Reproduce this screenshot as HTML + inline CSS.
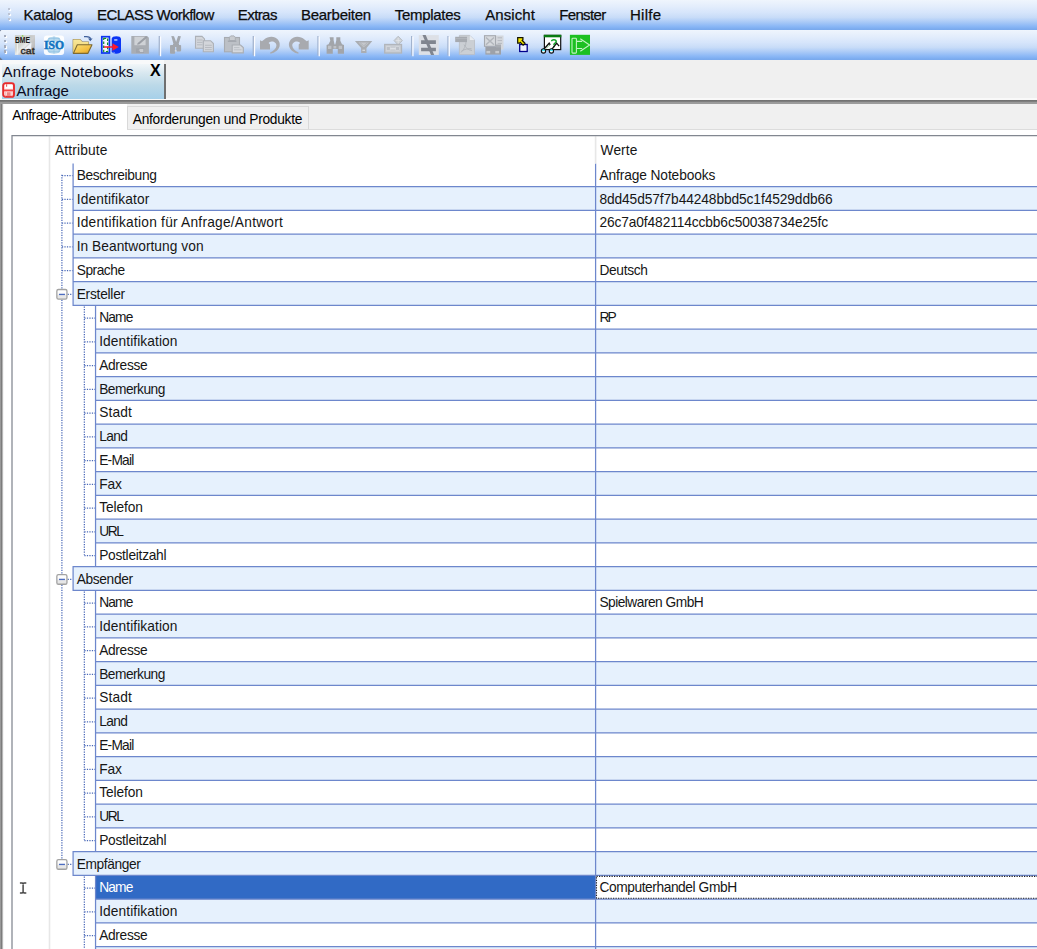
<!DOCTYPE html>
<html lang="de">
<head>
<meta charset="utf-8">
<title>Anfrage Notebooks</title>
<style>
html,body{margin:0;padding:0;overflow:hidden;}
body{width:1037px;height:949px;overflow:hidden;background:#fff;position:relative;font-family:"Liberation Sans",sans-serif;color:#000;}
.bar{position:absolute;left:0;width:1037px;height:30px;background:linear-gradient(to bottom,#eff5fd 0%,#e3edfc 22%,#d6e5fb 42%,#c8dcf8 58%,#accbf7 72%,#8cb8f6 87%,#7cacf0 96%,#78a8ec 100%);}
#menubar{top:0;}
#toolbar{top:30px;}
.mi{position:absolute;top:4.5px;font-size:15px;line-height:20px;white-space:pre;color:#0c0c0c;-webkit-text-stroke:0.25px #0c0c0c;}
.grip{position:absolute;left:6.5px;width:3px;}
.grip i{display:block;width:2.2px;height:2.2px;margin-bottom:2.9px;background:#bcc4d4;box-shadow:1.1px 1.1px 0 #fff;}
#docarea{position:absolute;left:0;top:60px;width:1037px;height:44px;background:#f0f0f0;}
#doctabbg{position:absolute;left:0;top:0;width:164.2px;height:38.5px;background:#f8f9fa;}
#doctab{position:absolute;left:2px;top:3.5px;width:162.2px;height:35px;background:linear-gradient(to bottom,#f1f6f9 0%,#d9e8f0 25%,#bcd9e8 60%,#a6d0e9 100%);border-right:2px solid #6f6f6f;}
#doctab .n{position:absolute;left:0.6px;top:-0.2px;font-size:15px;line-height:17px;white-space:pre;letter-spacing:0.16px;color:#0a0a1e}
#doctab .x{position:absolute;left:148px;top:-2px;font-size:16px;font-weight:bold;line-height:17px;}
#doctab .a{position:absolute;left:14.4px;top:18.7px;font-size:15px;line-height:17px;white-space:pre;color:#0a0a1e}
#docwhite{position:absolute;left:0;top:37.6px;width:1037px;height:2.4px;background:#f9f9f9;}
#docline{position:absolute;left:0;top:40px;width:1037px;height:4px;background:linear-gradient(to bottom,#727272 0,#747474 35%,#9a9a9a 45%,#9c9c9c 100%);}
#panel{position:absolute;left:0;top:104px;width:1037px;height:845px;background:#fff;overflow:hidden;}
#panel .lb{position:absolute;left:0;top:0;width:4px;height:845px;background:linear-gradient(to right,#b0b0b0 0,#7c7c7c 28%,#7c7c7c 42%,#b4b4b4 62%,#f2f2f2 85%,#fff 100%);}
#tabstrip{position:absolute;left:126.5px;top:0;width:911px;height:24.6px;background:#f0f0f0;border-bottom:1px solid #dcdcdc;}
#tab2{position:absolute;left:0;top:1.6px;width:180px;height:22px;border:1px solid #d9d9d9;border-bottom:none;background:#f0f0f0;}
.tt{position:absolute;font-size:13.75px;line-height:16px;white-space:pre;color:#000;}
#tree{position:absolute;left:0;top:0;width:1037px;height:949px;overflow:hidden;}
.t{position:absolute;font-size:13.75px;line-height:24px;height:24px;white-space:pre;color:#161616;}
svg{position:absolute;left:0;top:0;overflow:visible}
</style>
</head>
<body>
<div id="menubar" class="bar">
<div class="grip" style="top:7.5px;left:7.6px"><i></i><i></i><i></i></div>
<span class="mi" style="left:23.5px;letter-spacing:-0.268px">Katalog</span><span class="mi" style="left:97px;letter-spacing:-0.538px">ECLASS Workflow</span><span class="mi" style="left:237.8px;letter-spacing:-0.586px">Extras</span><span class="mi" style="left:301px;letter-spacing:-0.276px">Bearbeiten</span><span class="mi" style="left:394.8px;letter-spacing:-0.297px">Templates</span><span class="mi" style="left:485.3px;letter-spacing:0.057px">Ansicht</span><span class="mi" style="left:559.2px;letter-spacing:-0.651px">Fenster</span><span class="mi" style="left:629.9px;letter-spacing:0.317px">Hilfe</span>
</div>
<div id="toolbar" class="bar">
<div class="grip" style="top:5.2px;left:4.2px"><i style="background:#a4abbb"></i><i style="background:#a4abbb"></i><i style="background:#a4abbb"></i><i style="background:#a4abbb"></i></div>
<svg id="icons" width="1037" height="30" viewBox="0 30 1037 30" style="left:0;top:0">
<defs>
<linearGradient id="gBme" x1="0" y1="0" x2="1" y2="1"><stop offset="0" stop-color="#c9ccc6"/><stop offset="0.4" stop-color="#d6d8d4"/><stop offset="0.52" stop-color="#e9ecee"/><stop offset="0.62" stop-color="#c9c9c9"/><stop offset="1" stop-color="#a9a9a9"/></linearGradient>
<linearGradient id="gFold" x1="0" y1="0" x2="1" y2="1"><stop offset="0" stop-color="#fbe27a"/><stop offset="0.6" stop-color="#f3c043"/><stop offset="1" stop-color="#dc9a1c"/></linearGradient>
<linearGradient id="gFoldB" x1="0" y1="0" x2="0" y2="1"><stop offset="0" stop-color="#f8e79a"/><stop offset="1" stop-color="#efd06a"/></linearGradient>
</defs>
<!-- separators -->
<g stroke-width="1.25" fill="none">
<path d="M159.3 36V55.5M253.3 36V55.5M318 36V55.5M411.7 36V55.5M448 36V55.5" stroke="#9fb0cc"/>
<path d="M160.55 36.6V56.2M254.55 36.6V56.2M319.25 36.6V56.2M412.95 36.6V56.2M449.25 36.6V56.2" stroke="#fbfcff"/>
</g>
<!-- 1 BME cat -->
<g>
<rect x="14.9" y="35.2" width="20.1" height="19.7" fill="url(#gBme)"/>
<path d="M24.500 49L31.500 42.600L31 49.500Z" fill="#f4f8ff" opacity="0.9"/><rect x="29" y="35.200" width="6" height="7.500" fill="#c2c2c2" opacity="0.7"/>
<path d="M17.5 43.5V54.5" stroke="#eef1ee" stroke-width="1"/>
<circle cx="22.6" cy="35.9" r="0.9" fill="#8fd060"/>
<text x="14.9" y="42.6" font-family="Liberation Sans, sans-serif" font-weight="bold" font-size="8.6" textLength="15" lengthAdjust="spacingAndGlyphs" fill="#1a1a1a">BME</text>
<text x="20.6" y="54.3" font-family="Liberation Sans, sans-serif" font-size="9.6" textLength="14" lengthAdjust="spacingAndGlyphs" fill="#222" stroke="#222" stroke-width="0.3">cat</text>
</g>
<!-- 2 ISO -->
<g>
<rect x="43.9" y="35.4" width="20.2" height="19.6" rx="3" fill="#fff" opacity="0.92"/>
<circle cx="54" cy="45.1" r="8.7" fill="#b7d9ee"/>
<path d="M46 41.5h16M45.5 48.6h17M48 38.4h12M48 51.8h12M54 36.5v17M50 37.3c-3 4-3 11.600 0 15.600M58 37.300c3 4 3 11.600 0 15.600" stroke="#8fc2e2" stroke-width="0.7" fill="none"/>
<rect x="43.9" y="41" width="20.2" height="7.9" fill="#fff" opacity="0.55"/>
<text x="43.9" y="49.1" font-family="Liberation Serif, serif" font-weight="bold" font-size="12.6" textLength="20.2" lengthAdjust="spacingAndGlyphs" fill="#1173c2" stroke="#1173c2" stroke-width="0.5">ISO</text>
</g>
<!-- 3 open folder -->
<g>
<path d="M73.2 53.3V39.6h6.8l2.300 2.500h6.200V45" fill="url(#gFoldB)" stroke="#8d7d52" stroke-width="1.1" stroke-linejoin="round"/>
<path d="M73.2 53.3V39.600h6.800l2.300 2.500h6.200v2.900H77z" fill="url(#gFoldB)"/>
<path d="M77.300 44.700H92l-4.200 8.700H73.400z" fill="url(#gFold)" stroke="#7d6a33" stroke-width="1.1" stroke-linejoin="round"/>
<path d="M84 36.700h2.300M86.300 36.700c2.500 0 4 .8 4.200 2.200" stroke="#3f5f9a" stroke-width="1.300" fill="none"/>
<path d="M88 38.600h4.600l-2.300 2.700z" fill="#3f5f9a"/>
</g>
<!-- 4 export to db -->
<g>
<rect x="101.800" y="36.700" width="7.600" height="16.300" fill="#f4f6ff" stroke="#0b35f5" stroke-width="1.700"/>
<rect x="103.700" y="38.300" width="3.900" height="13.300" fill="none" stroke="#128a28" stroke-width="1.200" stroke-dasharray="2.500 1.600"/>
<path d="M111.700 38.800c0-3.300 9.300-3.300 9.300 0v12.400c0 3.300-9.300 3.300-9.300 0z" fill="#0b35f5"/>
<rect x="114.200" y="39.300" width="3.200" height="1.300" fill="#dfe6ff"/>
<path d="M104 46.200h8.500v-2.900l6.300 3.700-6.300 3.700v-2.900H104z" fill="#ff1a2c"/>
<path d="M113.500 52.300l1.200.6" stroke="#cdd6ff" stroke-width="0.8"/>
</g>
<!-- 5 save (disabled) -->
<g>
<path d="M131.300 35.900h15.800l1.800 1.800v16h-17.600z" fill="#a9adb3"/>
<rect x="134.400" y="36.800" width="11.200" height="8.400" fill="#cfd2d6"/>
<path d="M137.500 43.200l8.500-7.300 1.600 1.300-8.400 7.300z" fill="#9b9fa6"/>
<path d="M137 43.800l1.900-.3-.9 1.500z" fill="#8e9299"/>
<rect x="136" y="48.300" width="8" height="4.600" fill="#a0a4ab"/>
<path d="M136.800 50.800h2.700v-1.700h3.800v2.900h-3.400v-1z" fill="#c9ccd1"/>
</g>
<!-- 6 cut (disabled) -->
<g fill="#a3a7ad">
<path d="M171.300 36l2.700.2 2.100 5.800 2-6 2.800.2-2.700 9.300h-4.300z"/>
<rect x="170" y="45" width="5.100" height="8.700" rx="0.800"/>
<rect x="176.300" y="45" width="4.800" height="6.400" rx="0.800"/>
<path d="M173 44h6v3h-6z"/>
<rect x="174.800" y="50" width="1.700" height="1.500" fill="#d8dce2"/>
</g>
<!-- 7 copy (disabled) -->
<g stroke="#adb1b7" stroke-width="1.100" fill="#d3d6db">
<path d="M195.500 36.400h6.500l2.500 2.500v9.400h-9z"/>
<path d="M203.300 40.700h7.300l2.800 2.800v8.300h-10.100z"/>
<path d="M197 40h5.500M197 42.400h5.500M197 44.800h5.500M205 45.300h6.800M205 47.500h6.800M205 49.700h6.800" stroke="#b4b8be" stroke-width="0.9" fill="none"/>
</g>
<!-- 8 paste (disabled) -->
<g>
<rect x="224.500" y="37.500" width="15" height="14.300" fill="#bcc0c6" stroke="#a7abb1" stroke-width="1.100"/>
<path d="M229.400 40.600v-3.400l1.300-1.300h3.300l1.300 1.300v3.400z" fill="#c9ccd1" stroke="#a7abb1" stroke-width="0.9"/>
<path d="M227.800 41.200h8.600" stroke="#a0a4ab" stroke-width="1.200"/>
<path d="M232.200 45h8.300l2.800 2.600v5.300h-11.100z" fill="#d5d8dd" stroke="#a9adb3" stroke-width="1.100"/>
<path d="M234 47.600h5.500M234 49.800h7.500" stroke="#b9bdc3" stroke-width="0.9"/>
</g>
<!-- 9 undo (disabled) -->
<g fill="#a8aaaf">
<path d="M260 40.3L262 41.2L264.2 39.6C267 37.2 271.5 36 275 37.6C278.6 39.3 280.4 42.8 279.6 46.2C278.7 49.7 275.2 52.6 270.4 53.8L270.1 52.5C273.6 51 276.2 48.3 276.4 45.7C276.6 43 274.3 41.3 271.7 41.4C270.2 41.5 269.2 42.1 268.6 43.1L270 44.5V49.5H260Z"/>
</g>
<!-- 10 redo (disabled) -->
<g fill="#a8aaaf" transform="translate(568.700 0) scale(-1 1)">
<path d="M260 40.3L262 41.2L264.2 39.6C267 37.2 271.5 36 275 37.6C278.6 39.3 280.4 42.8 279.6 46.2C278.7 49.7 275.2 52.6 270.4 53.8L270.1 52.5C273.6 51 276.2 48.3 276.4 45.7C276.6 43 274.3 41.3 271.7 41.4C270.2 41.5 269.2 42.1 268.6 43.1L270 44.5V49.5H260Z"/>
</g>
<!-- 11 find (disabled) -->
<g fill="#a2a5aa">
<path d="M329.600 37.300h4v3l1 4.200h.7l1-4.200v-3h4v3.400l1.700 3.600 2 .7v8.700h-6.200v-4.600h-5v4.600h-6.200v-8.700l2-.7 1.700-3.600z"/>
<path d="M328 45.700h3.400v3.300H328zM338.700 45.700h3.400v3.300h-3.400zM333.500 46h2.800v2.400h-2.800z" fill="#bfc2c7"/>
</g>
<!-- 12 filter (disabled) -->
<g>
<path d="M354.900 41.100h17.400l-5.800 6.800v5.100h-5.400v-5.100z" fill="#aaadb2"/>
<path d="M358.500 42.600h10.400l-5.200 4.600z" fill="#c5c8cd"/>
<path d="M360 42.600l3.700 3.300 3.700-3.300" stroke="#aaadb2" stroke-width="0.800" fill="none"/>
<rect x="362.400" y="49.700" width="2.600" height="1.100" fill="#dde0e5"/>
</g>
<!-- 13 export (disabled) -->
<g>
<path d="M398.200 36.200l4.200 4.400-4.200 4.400-4.200-4.400z" fill="#ccd0d5" stroke="#b6bac0" stroke-width="0.900"/>
<path d="M398.200 38v5.500M395.800 40.600h4.800" stroke="#e1e4e8" stroke-width="0.900"/>
<rect x="384.700" y="44.500" width="16.800" height="8.500" fill="#c9cdd3" stroke="#b1b5bb" stroke-width="1.300"/>
<rect x="386.300" y="46.700" width="3.900" height="3.900" fill="#bcc0c7" stroke="#d9dce1" stroke-width="0.600"/>
<rect x="395.700" y="46.700" width="3.900" height="3.900" fill="#bcc0c7" stroke="#d9dce1" stroke-width="0.600"/>
<path d="M390.200 48.700h5.500" stroke="#e3e6ea" stroke-width="1"/>
</g>
<!-- 14 not-equal -->
<g>
<rect x="418.800" y="35.100" width="20" height="19.800" fill="#dde0e6"/>
<path d="M421.100 40.200h14.800v3.700h-14.800zM421.100 47.700h14.800v3.500h-14.800z" fill="#80858f"/>
<path d="M422.500 35.100h3.200l8.500 19.800h-3.200z" fill="#80858f"/>
</g>
<!-- 15 pdf (disabled) -->
<g>
<path d="M459.400 35.400h10.400l4.700 4.700v14.500h-15.100z" fill="#cbcfd4" stroke="#b9bdc3" stroke-width="0.800"/>
<path d="M469.800 35.400l4.700 4.700h-4.700z" fill="#e9ecf0"/>
<rect x="455.200" y="36.800" width="11.800" height="5.300" fill="#a6aab0"/>
<path d="M455.200 38.500h11.800" stroke="#b4b8be" stroke-width="0.8"/>
<path d="M461 52.500c3-3 5-7 5-10.500M464 44.500c1.500 3.500 4.500 5.500 8 6M461.500 51c3-1.800 6.500-2.500 10-2.300" stroke="#b3b7bd" stroke-width="1" fill="none"/>
</g>
<!-- 16 grid (disabled) -->
<g>
<rect x="496" y="35.500" width="7.500" height="14" fill="#d4d7dc"/>
<path d="M497.600 37.800h4.400M497.600 40.600h4.400M497.600 43.400h4.400" stroke="#b5b9bf" stroke-width="1"/>
<rect x="484.500" y="35.700" width="11" height="10.600" fill="#d7dade" stroke="#a5a9af" stroke-width="1.100"/>
<path d="M486 37.500l8 7.300M494 37.500l-8 7.300" stroke="#b2b6bc" stroke-width="1.500"/>
<rect x="485.400" y="46.800" width="15.600" height="7.800" fill="#9da1a8"/>
<rect x="496" y="44.500" width="5" height="3" fill="#a8acb2"/>
<rect x="486.400" y="50.900" width="3.800" height="2.400" fill="#c6c9ce"/>
<rect x="495.300" y="50.900" width="3.800" height="2.400" fill="#c6c9ce"/>
</g>
<!-- 17 pointer -->
<g>
<rect x="519.700" y="44.500" width="7.500" height="7" fill="#eef2ff" stroke="#00008c" stroke-width="1.300"/>
<path d="M517.7 37.7h5.200v2.100l-.7.7 2.800 2.800-1.900 1.900-2.800-2.800-.7.7h-1.900z" fill="#f6e600" stroke="#151500" stroke-width="1.250" stroke-linejoin="miter"/>
</g>
<!-- 18 glasses help -->
<g>
<rect x="544.400" y="35.400" width="16.300" height="14.200" fill="#fff" stroke="#111" stroke-width="1.200"/>
<rect x="543.800" y="34.800" width="17.500" height="2.500" fill="#0a7a12"/>
<path d="M551.6 41.300c0-2.200 4.600-2.200 4.600.2 0 1.700-2.300 1.700-2.300 3.400" fill="none" stroke="#12a426" stroke-width="1.500"/><rect x="553.100" y="45.700" width="1.600" height="1.500" fill="#12a426"/>
<path d="M546.5 48l4.200-3.600" stroke="#3aa84a" stroke-width="0.9" stroke-dasharray="1.500 1.200"/>
<path d="M543.600 49.500l5.600-6.300 1 1.600M551.700 49.500l5-6.300 2.400 3" stroke="#111" stroke-width="1.300" fill="none"/>
<circle cx="543.5" cy="51" r="2.100" fill="#f4ffff" stroke="#111" stroke-width="1.200"/><path d="M541.900 50.800a1.600 1.600 0 0 1 3.200 0z" fill="#12e2ff"/>
<circle cx="551.4" cy="51" r="2.100" fill="#f4ffff" stroke="#111" stroke-width="1.200"/><path d="M549.800 50.800a1.600 1.600 0 0 1 3.200 0z" fill="#12e2ff"/>
</g>
<!-- 19 green arrow -->
<g>
<rect x="569.900" y="34.800" width="20.100" height="20.100" fill="#1cc022"/>
<rect x="572" y="38.200" width="4.400" height="14.900" rx="0.800" fill="none" stroke="#c4f3c4" stroke-width="1.100"/>
<path d="M576.600 41.400h5.600M576.600 48.500h5.600M580.300 38.800l9.300 6.200-9.300 6.200" fill="none" stroke="#c4f3c4" stroke-width="1.100"/>
</g>
</svg>

<svg width="4" height="32" viewBox="0 0 4 32" style="left:0;top:-1px"><path d="M0 1h1.400L0 2.400zM0 28.200l2.600 2.600L0 32z" fill="#6c7a93"/></svg>
</div>
<div id="docarea">
<div id="docwhite"></div>
<div id="doctabbg"></div>
<div id="doctab"><span class="n">Anfrage Notebooks</span><span class="x">X</span><svg width="14" height="17" viewBox="0 0 14 17" style="left:0;top:18.3px"><rect x="1.2" y="1.2" width="10.800" height="13.600" rx="2.400" fill="#ffe9e9" stroke="#e92a2a" stroke-width="1.900"/><rect x="3.100" y="2.600" width="7.200" height="3.800" fill="#fff"/><path d="M4.600 2.200v2.600" stroke="#ee5555" stroke-width="1.100"/><rect x="2" y="7.500" width="9.600" height="1.900" fill="#f24545"/><rect x="4.800" y="10.200" width="3.800" height="4" fill="#ee8585"/><path d="M3.300 9.400v5M10 9.400v5" stroke="#f7b0b0" stroke-width="0.900"/></svg>
<span class="a">Anfrage</span></div>
<div id="docline"></div>
</div>
<div id="panel">
<div class="lb"></div>
<div id="tabstrip"><div id="tab2"></div></div>
<span class="tt" style="left:12.2px;top:4.4px;letter-spacing:-0.413px">Anfrage-Attributes</span>
<span class="tt" style="left:132.8px;top:8px;letter-spacing:-0.281px">Anforderungen und Produkte</span>
</div>
<div id="tree">
<svg width="1037" height="949" viewBox="0 0 1037 949">
<defs><linearGradient id="bg" x1="0" y1="0" x2="0" y2="1"><stop offset="0" stop-color="#fff"/><stop offset="0.5" stop-color="#fbfbfb"/><stop offset="0.55" stop-color="#e9e9e9"/><stop offset="1" stop-color="#e4e4e4"/></linearGradient></defs>
<rect x="73.1" y="186.7" width="963.9" height="23.75" fill="#e6f1fd"/>
<rect x="73.1" y="234.2" width="963.9" height="23.75" fill="#e6f1fd"/>
<rect x="73.1" y="281.7" width="963.9" height="23.75" fill="#e6f1fd"/>
<rect x="95.55" y="329.2" width="941.45" height="23.75" fill="#e6f1fd"/>
<rect x="95.55" y="376.7" width="941.45" height="23.75" fill="#e6f1fd"/>
<rect x="95.55" y="424.2" width="941.45" height="23.75" fill="#e6f1fd"/>
<rect x="95.55" y="471.7" width="941.45" height="23.75" fill="#e6f1fd"/>
<rect x="95.55" y="519.2" width="941.45" height="23.75" fill="#e6f1fd"/>
<rect x="73.1" y="566.7" width="963.9" height="23.75" fill="#e6f1fd"/>
<rect x="95.55" y="614.2" width="941.45" height="23.75" fill="#e6f1fd"/>
<rect x="95.55" y="661.7" width="941.45" height="23.75" fill="#e6f1fd"/>
<rect x="95.55" y="709.2" width="941.45" height="23.75" fill="#e6f1fd"/>
<rect x="95.55" y="756.7" width="941.45" height="23.75" fill="#e6f1fd"/>
<rect x="95.55" y="804.2" width="941.45" height="23.75" fill="#e6f1fd"/>
<rect x="73.1" y="851.7" width="963.9" height="23.75" fill="#e6f1fd"/>
<rect x="95.55" y="899.2" width="941.45" height="23.75" fill="#e6f1fd"/>
<rect x="95.55" y="946.7" width="941.45" height="23.75" fill="#e6f1fd"/>
<rect x="95.55" y="875.45" width="500.05" height="23.75" fill="#316ac5"/>
<rect x="595.6" y="875.45" width="441.4" height="23.75" fill="#fff"/>
<path d="M72.5 186.7H1037 M72.5 210.45H1037 M72.5 234.2H1037 M72.5 257.95H1037 M72.5 281.7H1037 M72.5 305.45H1037 M94.95 329.2H1037 M94.95 352.95H1037 M94.95 376.7H1037 M94.95 400.45H1037 M94.95 424.2H1037 M94.95 447.95H1037 M94.95 471.7H1037 M94.95 495.45H1037 M94.95 519.2H1037 M94.95 542.95H1037 M72.5 566.7H1037 M72.5 590.45H1037 M94.95 614.2H1037 M94.95 637.95H1037 M94.95 661.7H1037 M94.95 685.45H1037 M94.95 709.2H1037 M94.95 732.95H1037 M94.95 756.7H1037 M94.95 780.45H1037 M94.95 804.2H1037 M94.95 827.95H1037 M72.5 851.7H1037 M72.5 875.45H1037 M94.95 899.2H1037 M94.95 922.95H1037 M94.95 946.7H1037 M94.95 970.45H1037 M73.1 163.55V305.45 M95.55 305.45V566.7 M73.1 566.7V590.45 M95.55 590.45V851.7 M73.1 851.7V875.45 M95.55 875.45V949 M595.6 163.55V949" stroke="#6d87cc" stroke-width="1.25" fill="none"/>
<path d="M49.5 136.3V949 M595.6 136.3V163.55" stroke="#e7e7e7" stroke-width="1.6" fill="none"/>
<path d="M61.9 174.82V859.08 M61.9 175.57H72.5 M61.9 199.32H72.5 M61.9 223.07H72.5 M61.9 246.82H72.5 M61.9 270.57H72.5 M67.6 294.32H72.5 M84.35 318.07H94.95 M84.35 341.82H94.95 M84.35 365.57H94.95 M84.35 389.32H94.95 M84.35 413.07H94.95 M84.35 436.82H94.95 M84.35 460.57H94.95 M84.35 484.32H94.95 M84.35 508.07H94.95 M84.35 531.83H94.95 M84.35 555.58H94.95 M67.6 579.33H72.5 M84.35 603.08H94.95 M84.35 626.83H94.95 M84.35 650.58H94.95 M84.35 674.33H94.95 M84.35 698.08H94.95 M84.35 721.83H94.95 M84.35 745.58H94.95 M84.35 769.33H94.95 M84.35 793.08H94.95 M84.35 816.83H94.95 M84.35 840.58H94.95 M67.6 864.33H72.5 M84.35 888.08H94.95 M84.35 911.83H94.95 M84.35 935.58H94.95 M84.35 959.33H94.95 M84.35 306.45V554.83 M84.35 591.45V839.83 M84.35 876.45V949" stroke="#4a69b8" stroke-width="1.25" stroke-dasharray="1.25 1.25" fill="none"/>
<rect x="56.85" y="289.52" width="10.1" height="9.7" rx="1.6" fill="url(#bg)" stroke="#a2a2a2" stroke-width="1.3"/>
<path d="M58.95 294.43h6" stroke="#4c6cc0" stroke-width="1.35"/>
<rect x="56.85" y="574.53" width="10.1" height="9.7" rx="1.6" fill="url(#bg)" stroke="#a2a2a2" stroke-width="1.3"/>
<path d="M58.95 579.43h6" stroke="#4c6cc0" stroke-width="1.35"/>
<rect x="56.85" y="859.53" width="10.1" height="9.7" rx="1.6" fill="url(#bg)" stroke="#a2a2a2" stroke-width="1.3"/>
<path d="M58.95 864.43h6" stroke="#4c6cc0" stroke-width="1.35"/>
<path d="M12 960V135.7H1040" stroke="#828790" stroke-width="1.25" fill="none"/>
<rect x="596.5" y="876.35" width="445.4" height="21.95" fill="none" stroke="#222" stroke-width="1.1" stroke-dasharray="1.25 1.25"/>
<path d="M19.9 883h2.3l0.9 0.9 0.9-0.900h2.300M19.900 892.900h2.300l0.900-0.900 0.900 0.900h2.300M23.100 883.500v9" stroke="#484848" stroke-width="1.500" fill="none"/>
</svg>
<span class="t h" style="left:54.9px;top:138.7px;letter-spacing:0.165px;">Attribute</span>
<span class="t h" style="left:600.6px;top:138.7px;letter-spacing:0.072px;">Werte</span>
<span class="t l" style="left:76.7px;top:163.85px;letter-spacing:-0.358px;">Beschreibung</span>
<span class="t v" style="left:599.4px;top:163.85px;letter-spacing:-0.107px;">Anfrage Notebooks</span>
<span class="t l" style="left:76.7px;top:187.6px;letter-spacing:0.124px;">Identifikator</span>
<span class="t v" style="left:599.4px;top:187.6px;letter-spacing:-0.096px;">8dd45d57f7b44248bbd5c1f4529ddb66</span>
<span class="t l" style="left:76.7px;top:211.35px;letter-spacing:0.225px;">Identifikation für Anfrage/Antwort</span>
<span class="t v" style="left:599.4px;top:211.35px;letter-spacing:-0.109px;">26c7a0f482114ccbb6c50038734e25fc</span>
<span class="t l" style="left:76.7px;top:235.1px;letter-spacing:0.040px;">In Beantwortung von</span>
<span class="t l" style="left:76.7px;top:258.85px;letter-spacing:-0.474px;">Sprache</span>
<span class="t v" style="left:599.4px;top:258.85px;letter-spacing:-0.322px;">Deutsch</span>
<span class="t l" style="left:76.7px;top:282.6px;letter-spacing:-0.249px;">Ersteller</span>
<span class="t l" style="left:99.2px;top:306.35px;letter-spacing:-0.822px;">Name</span>
<span class="t v" style="left:599.4px;top:306.35px;letter-spacing:-1.755px;">RP</span>
<span class="t l" style="left:99.2px;top:330.1px;letter-spacing:0.078px;">Identifikation</span>
<span class="t l" style="left:99.2px;top:353.85px;letter-spacing:-0.322px;">Adresse</span>
<span class="t l" style="left:99.2px;top:377.6px;letter-spacing:-0.525px;">Bemerkung</span>
<span class="t l" style="left:99.2px;top:401.35px;letter-spacing:0.138px;">Stadt</span>
<span class="t l" style="left:99.2px;top:425.1px;letter-spacing:-0.598px;">Land</span>
<span class="t l" style="left:99.2px;top:448.85px;letter-spacing:-0.778px;">E-Mail</span>
<span class="t l" style="left:99.2px;top:472.6px;letter-spacing:-0.174px;">Fax</span>
<span class="t l" style="left:99.2px;top:496.35px;letter-spacing:-0.106px;">Telefon</span>
<span class="t l" style="left:99.2px;top:520.1px;letter-spacing:-1.439px;">URL</span>
<span class="t l" style="left:99.2px;top:543.85px;letter-spacing:-0.269px;">Postleitzahl</span>
<span class="t l" style="left:76.7px;top:567.6px;letter-spacing:-0.359px;">Absender</span>
<span class="t l" style="left:99.2px;top:591.35px;letter-spacing:-0.822px;">Name</span>
<span class="t v" style="left:599.4px;top:591.35px;letter-spacing:-0.519px;">Spielwaren GmbH</span>
<span class="t l" style="left:99.2px;top:615.1px;letter-spacing:0.078px;">Identifikation</span>
<span class="t l" style="left:99.2px;top:638.85px;letter-spacing:-0.322px;">Adresse</span>
<span class="t l" style="left:99.2px;top:662.6px;letter-spacing:-0.525px;">Bemerkung</span>
<span class="t l" style="left:99.2px;top:686.35px;letter-spacing:0.138px;">Stadt</span>
<span class="t l" style="left:99.2px;top:710.1px;letter-spacing:-0.598px;">Land</span>
<span class="t l" style="left:99.2px;top:733.85px;letter-spacing:-0.778px;">E-Mail</span>
<span class="t l" style="left:99.2px;top:757.6px;letter-spacing:-0.174px;">Fax</span>
<span class="t l" style="left:99.2px;top:781.35px;letter-spacing:-0.106px;">Telefon</span>
<span class="t l" style="left:99.2px;top:805.1px;letter-spacing:-1.439px;">URL</span>
<span class="t l" style="left:99.2px;top:828.85px;letter-spacing:-0.269px;">Postleitzahl</span>
<span class="t l" style="left:76.7px;top:852.6px;letter-spacing:-0.396px;">Empfänger</span>
<span class="t l" style="left:99.2px;top:876.35px;letter-spacing:-0.822px;color:#fff;">Name</span>
<span class="t v" style="left:599.4px;top:876.35px;letter-spacing:-0.417px;">Computerhandel GmbH</span>
<span class="t l" style="left:99.2px;top:900.1px;letter-spacing:0.078px;">Identifikation</span>
<span class="t l" style="left:99.2px;top:923.85px;letter-spacing:-0.322px;">Adresse</span>
<span class="t l" style="left:99.2px;top:947.6px;letter-spacing:-0.525px;">Bemerkung</span>
</div>
</body>
</html>
